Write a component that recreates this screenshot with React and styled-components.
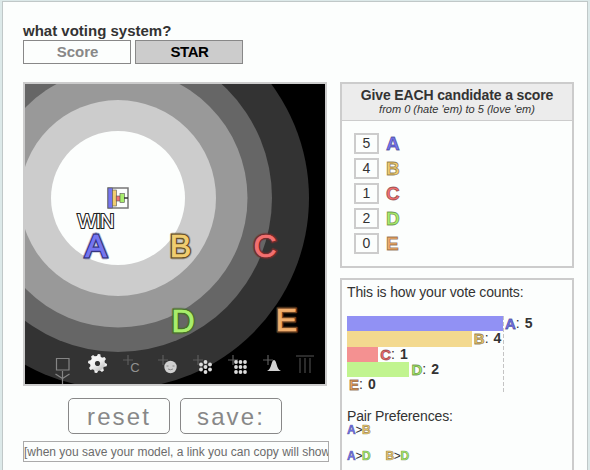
import React from "react";
import styled, { createGlobalStyle } from "styled-components";

const GlobalStyle = createGlobalStyle`
  * { box-sizing: border-box; }
  body { margin: 0; background: #dce9e9; overflow: hidden; }
`;

const candidates = {
  A: { fill: "#7575f0", edge: "#35357e", bar: "#9191f4", score: 5 },
  B: { fill: "#f0cd70", edge: "#665229", bar: "#f3d98f", score: 4 },
  C: { fill: "#f27070", edge: "#712d2d", bar: "#f49191", score: 1 },
  D: { fill: "#a8ee6c", edge: "#4a6e2c", bar: "#c1f48f", score: 2 },
  E: { fill: "#f0ad6c", edge: "#6c4626", bar: "#f4c18f", score: 0 },
};
const ids = Object.keys(candidates);

const Page = styled.main`
  width: 586px;
  height: 469px;
  margin: 1px 0 0 2px;
  padding: 21px 0 0 20px;
  overflow: hidden;
  background: #fcfefd;
  border: 1px solid #c0c8c8;
  border-bottom: 0;
  color: #333;
  font-family: "Liberation Sans", Arial, sans-serif;
`;

const Question = styled.h1`
  margin: 0;
  height: 17px;
  font-size: 15px;
  line-height: 15px;
  font-weight: bold;
`;

const Options = styled.div`
  display: flex;
  gap: 4px;
`;

const Option = styled.button`
  width: 108px;
  height: 24px;
  padding: 0 0 0 1px;
  border: 1px solid #888;
  background: ${(p) => (p.$active ? "#ccc" : "#fcfefd")};
  color: ${(p) => (p.$active ? "#000" : "#888")};
  font: bold 15px/22px "Liberation Sans", Arial, sans-serif;
  letter-spacing: ${(p) => (p.$active ? "-0.4px" : "0")};
`;

const Columns = styled.div`
  display: flex;
  align-items: flex-start;
  gap: 11px;
  margin-top: 18px;
`;

const LeftColumn = styled.section`
  width: 306px;
`;

const Arena = styled.div`
  width: 304px;
  height: 304px;
  border: 2px solid #ccc;
  svg { display: block; }
`;

const Actions = styled.div`
  display: flex;
  gap: 10px;
  margin: 12px 0 7px 45px;
`;

const Action = styled.button`
  width: 102px;
  height: 36px;
  padding: 0;
  border: 1px solid #888;
  border-radius: 5px;
  background: #fcfefd;
  color: #888;
  font: 24px/35px "Liberation Sans", Arial, sans-serif;
  letter-spacing: 2.1px;
`;

const LinkField = styled.div`
  height: 21px;
  overflow: hidden;
  border: 1px solid #aaa;
  color: #6b6b6b;
  font-size: 12px;
  line-height: 20px;
  white-space: nowrap;
`;

const RightColumn = styled.section`
  display: flex;
  flex-direction: column;
  gap: 10px;
  width: 234px;
`;

const Panel = styled.div`
  height: ${(p) => p.$height}px;
  border: 2px solid #ccc;
`;

const BallotHeader = styled.header`
  height: 37px;
  padding-top: 3px;
  background: #ececec;
  border-bottom: 1px solid #ccc;
  text-align: center;
`;

const BallotTitle = styled.div`
  font-size: 14px;
  line-height: 17px;
  font-weight: bold;
  letter-spacing: -0.13px;
`;

const BallotHint = styled.div`
  font-size: 11px;
  line-height: 11px;
  font-style: italic;
`;

const Ballot = styled.div`
  display: grid;
  gap: 4px;
  padding: 12px 0 0 12px;
`;

const BallotRow = styled.div`
  display: flex;
  align-items: center;
  gap: 7px;
  height: 21px;
`;

const ScoreBox = styled.div`
  width: 25px;
  height: 21px;
  border: 2px solid #ccc;
  font-size: 14px;
  line-height: 17px;
  text-align: center;
`;

const Letter = styled.b`
  font-size: ${(p) => p.$size}px;
  line-height: 1;
  color: ${(p) => candidates[p.$id].fill};
  -webkit-text-stroke: ${(p) => p.$stroke || 0.8}px ${(p) => candidates[p.$id].edge}aa;
`;

const Results = styled.div`
  padding: 4px 5px 0;
  font-size: 14px;
`;

const ResultText = styled.div`
  height: 16px;
  margin: ${(p) => p.$top || 0}px 0 ${(p) => p.$bottom || 0}px;
  line-height: 16px;
  letter-spacing: -0.14px;
`;

const Chart = styled.div`
  width: 157px;
  height: 77px;
  background: repeating-linear-gradient(#c4c4c4 0 4px, transparent 4px 6px) right / 1px 100% no-repeat;
`;

const ChartRow = styled.div`
  display: flex;
  align-items: flex-start;
  height: 15.35px;
  line-height: 15px;
  white-space: nowrap;
`;

const Bar = styled.div`
  flex: none;
  width: ${(p) => p.$score * 31.2}px;
  height: 100%;
  margin-right: 2px;
  background: ${(p) => p.$color};
`;

const Value = styled.b`
  margin-left: 5px;
`;

const Pairs = styled.div`
  display: flex;
  gap: 15px;
  height: 12px;
  margin-bottom: 14px;
  font-size: 12px;
  line-height: 12px;
  letter-spacing: -0.3px;
`;

const mapPositions = { A: [71, 173], B: [155.5, 172.5], C: [240, 172.5], D: [158, 247.5], E: [261.5, 246.5] };
const rings = [[191, "#333"], [154, "#666"], [129.5, "#999"], [98, "#ccc"], [67, "#fcfefd"]];

function MapLetter({ id }) {
  const [x, y] = mapPositions[id];
  const c = candidates[id];
  const font = { x, y, textAnchor: "middle", fontFamily: "Liberation Sans, Arial, sans-serif", fontSize: 32 };
  return (
    <g>
      <text {...font} fill={c.fill} stroke={c.edge} strokeOpacity=".3" strokeWidth="5" paintOrder="stroke" strokeLinejoin="round">{id}</text>
      <text {...font} fill={c.fill} stroke={c.edge} strokeWidth="3.2" paintOrder="stroke" aria-hidden="true">{id}</text>
      <text {...font} fill={c.fill} stroke={c.fill} strokeWidth=".5" aria-hidden="true">{id}</text>
    </g>
  );
}

function Plus({ x, y }) {
  return <path d={`M${x - 5} ${y}h10M${x} ${y - 5}v10`} stroke="#5c5c5c" strokeWidth="1.2" />;
}

function Dots({ points }) {
  return points.map(([x, y]) => <circle key={`${x},${y}`} cx={x} cy={y} r="1.9" fill="#dcdcdc" />);
}

function Gear() {
  const teeth = [0, 45, 90, 135, 180, 225, 270, 315];
  return (
    <g transform="translate(72.5 279.5) rotate(10)">
      <defs>
        <linearGradient id="metal" gradientUnits="userSpaceOnUse" x1="-8" y1="-8" x2="8" y2="8">
          <stop stopColor="#fff" />
          <stop offset=".5" stopColor="#eee" />
          <stop offset="1" stopColor="#aaa" />
        </linearGradient>
      </defs>
      {teeth.map((a) => <path key={a} d="M-2.4-6L-1.2-9.5H1.2L2.4-6Z" fill="#eee" transform={`rotate(${a})`} />)}
      <circle r="5" fill="none" stroke="url(#metal)" strokeWidth="4.8" />
    </g>
  );
}

function VoterMap() {
  return (
    <svg width="300" height="300" viewBox="0 0 300 300">
      <rect width="300" height="300" fill="#000" />
      {rings.map(([r, fill]) => <circle key={r} cx="93" cy="114" r={r} fill={fill} />)}
      <g stroke="#555" strokeWidth=".6">
        <rect x="83" y="104" width="20" height="20" fill="#fcfefd" stroke="#777" strokeWidth="1.5" />
        <rect x="83" y="104" width="4.5" height="20" fill="#7575f0" />
        <rect x="87.5" y="106" width="4" height="16" fill="#f0cd70" />
        <rect x="91.2" y="112" width="4" height="5" fill="#f27070" />
        <rect x="95" y="109.5" width="4.5" height="9" fill="#a8ee6c" />
        <path d="M99 114h4" stroke="#333" strokeWidth="1.5" />
      </g>
      {ids.map((id) => <MapLetter key={id} id={id} />)}
      <text x="71" y="143.5" textAnchor="middle" textLength="37" fontFamily="Liberation Sans, Arial, sans-serif" fontSize="20" fill="#fff" stroke="#222" strokeWidth="2.2" paintOrder="stroke">WIN</text>

      <path d="M31.5 274.5h12.5v11.5H31.5zM37.5 287v13M30.5 290l7 4.5 7-4.5" fill="none" stroke="#858585" strokeWidth="1.2" />
      <Gear />
      <Plus x={103} y={276} />
      <text x="110" y="287.5" textAnchor="middle" fontFamily="Liberation Sans, Arial, sans-serif" fontSize="13" fill="#929292">C</text>
      <Plus x={138} y={276} />
      <circle cx="145.5" cy="283" r="6.2" fill="#d0d0d0" />
      <path d="M141.5 282h2M147.5 282h2M143 285q2.5 1.5 5 0" fill="none" stroke="#777" strokeWidth=".8" />
      <Plus x={173} y={276} />
      <Dots points={[[180.5, 278], [176, 280.5], [185, 280.5], [180.5, 283], [176, 285.5], [185, 285.5], [180.5, 288]]} />
      <Plus x={208} y={276} />
      <Dots points={[[211, 278], [215.5, 278], [220, 278], [211, 283], [215.5, 283], [220, 283], [211, 288], [215.5, 288], [220, 288]]} />
      <Plus x={243} y={276} />
      <path d="M242 287C247 285 246 276 249 276C252 276 251 285 256 287Z" fill="#d2d2d2" />
      <path d="M271 272h18M275 274v15M280 274v15M285 274v15" stroke="#3a3a3a" strokeWidth="1.5" />
    </svg>
  );
}

function Pair({ first, second }) {
  return (
    <span>
      <Letter $id={first} $size={12} $stroke={0.6}>{first}</Letter>&gt;
      <Letter $id={second} $size={12} $stroke={0.6}>{second}</Letter>
    </span>
  );
}

export default function App() {
  return (
    <Page>
      <GlobalStyle />
      <Question>what voting system?</Question>
      <Options>
        <Option>Score</Option>
        <Option $active>STAR</Option>
      </Options>
      <Columns>
        <LeftColumn>
          <Arena><VoterMap /></Arena>
          <Actions>
            <Action>reset</Action>
            <Action>save:</Action>
          </Actions>
          <LinkField>[when you save your model, a link you can copy will show</LinkField>
        </LeftColumn>
        <RightColumn>
          <Panel $height={186}>
            <BallotHeader>
              <BallotTitle>Give EACH candidate a score</BallotTitle>
              <BallotHint>from 0 (hate 'em) to 5 (love 'em)</BallotHint>
            </BallotHeader>
            <Ballot>
              {ids.map((id) => (
                <BallotRow key={id}>
                  <ScoreBox>{candidates[id].score}</ScoreBox>
                  <Letter $id={id} $size={19}>{id}</Letter>
                </BallotRow>
              ))}
            </Ballot>
          </Panel>
          <Panel $height={220}>
            <Results>
              <ResultText $bottom={16}>This is how your vote counts:</ResultText>
              <Chart>
                {ids.map((id) => (
                  <ChartRow key={id}>
                    <Bar $score={candidates[id].score} $color={candidates[id].bar} />
                    <Letter $id={id} $size={15}>{id}</Letter>:<Value>{candidates[id].score}</Value>
                  </ChartRow>
                ))}
              </Chart>
              <ResultText $top={15}>Pair Preferences:</ResultText>
              <Pairs><Pair first="A" second="B" /></Pairs>
              <Pairs>
                <Pair first="A" second="D" />
                <Pair first="B" second="D" />
              </Pairs>
            </Results>
          </Panel>
        </RightColumn>
      </Columns>
    </Page>
  );
}
